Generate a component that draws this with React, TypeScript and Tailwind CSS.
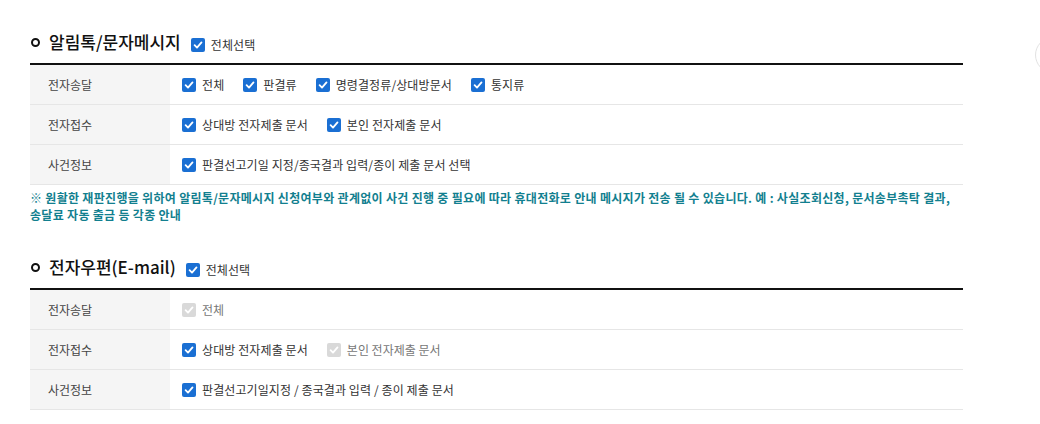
import React from 'react';

interface CheckProps {
  label: string;
  checked?: boolean;
  disabled?: boolean;
}

const Check: React.FC<CheckProps> = ({ label, disabled }) => (
  <label className="flex items-center gap-[6px] mr-[19px]">
    <span
      className={
        disabled
          ? 'w-[14px] h-[14px] rounded-[2px] bg-[#d9d9d9] flex items-center justify-center'
          : 'w-[14px] h-[14px] rounded-[2px] bg-[#1a6fd3] flex items-center justify-center'
      }
    >
      <svg width="10" height="10" viewBox="0 0 10 10" fill="none">
        <path d="M1.6 5.2 L4 7.6 L8.5 2.4" stroke="white" strokeWidth="1.8" strokeLinecap="round" strokeLinejoin="round" />
      </svg>
    </span>
    <span className={disabled ? 'text-[#777]' : 'text-[#333] tracking-[0.1px]'}>{label}</span>
  </label>
);

interface RowProps {
  title: string;
  items: CheckProps[];
}

const Row: React.FC<RowProps> = ({ title, items }) => (
  <div className="flex h-[40px] border-b border-[#e6e6e6]">
    <div className="w-[140px] bg-[#f5f5f5] pl-[18px] flex items-center text-[#444]">{title}</div>
    <div className="flex-1 pl-[12px] flex items-center">
      {items.map((it) => (
        <Check key={it.label} {...it} />
      ))}
    </div>
  </div>
);

const SectionTitle: React.FC<{ title: string }> = ({ title }) => (
  <div className="flex items-end h-[28px] mb-[8px]">
    <span className="w-[9px] h-[9px] rounded-full border-[2px] border-[#111] mr-[9px] mb-[8px] ml-[1px]" />
    <h2 className="text-[17px] font-medium text-[#111] leading-[26px]">{title}</h2>
    <span className="ml-[10px] mb-[1px] text-[12px]">
      <Check label="전체선택" />
    </span>
  </div>
);

export default function App() {
  return (
    <div
      className="relative w-[1040px] h-[424px] bg-white overflow-hidden text-[12px]"
      style={{ fontFamily: '"Noto Sans CJK KR", "Noto Sans", sans-serif' }}
    >
      <div className="w-[933px] ml-[30px] pt-[27px]">
        <SectionTitle title="알림톡/문자메시지" />
        <div className="border-t-2 border-[#111]">
          <Row
            title="전자송달"
            items={[{ label: '전체' }, { label: '판결류' }, { label: '명령결정류/상대방문서' }, { label: '통지류' }]}
          />
          <Row title="전자접수" items={[{ label: '상대방 전자제출 문서' }, { label: '본인 전자제출 문서' }]} />
          <Row title="사건정보" items={[{ label: '판결선고기일 지정/종국결과 입력/종이 제출 문서 선택' }]} />
        </div>
        <p className="mt-[4px] text-[12px] text-[#127f8f] font-bold leading-[17px] tracking-[0.3px] break-keep">
          ※ 원활한 재판진행을 위하여 알림톡/문자메시지 신청여부와 관계없이 사건 진행 중 필요에 따라 휴대전화로 안내 메시지가 전송 될 수 있습니다. 예 : 사실조회신청, 문서송부촉탁 결과, 송달료 자동 출금 등 각종 안내
        </p>

        <div className="mt-[29px]">
          <SectionTitle title="전자우편(E-mail)" />
        </div>
        <div className="border-t-2 border-[#111]">
          <Row title="전자송달" items={[{ label: '전체', disabled: true }]} />
          <Row
            title="전자접수"
            items={[{ label: '상대방 전자제출 문서' }, { label: '본인 전자제출 문서', disabled: true }]}
          />
          <Row title="사건정보" items={[{ label: '판결선고기일지정 / 종국결과 입력 / 종이 제출 문서' }]} />
        </div>
      </div>
      <div className="absolute left-[1035px] top-[37px] w-[36px] h-[36px] rounded-full border border-[#e2e2e2] bg-white" />
    </div>
  );
}
